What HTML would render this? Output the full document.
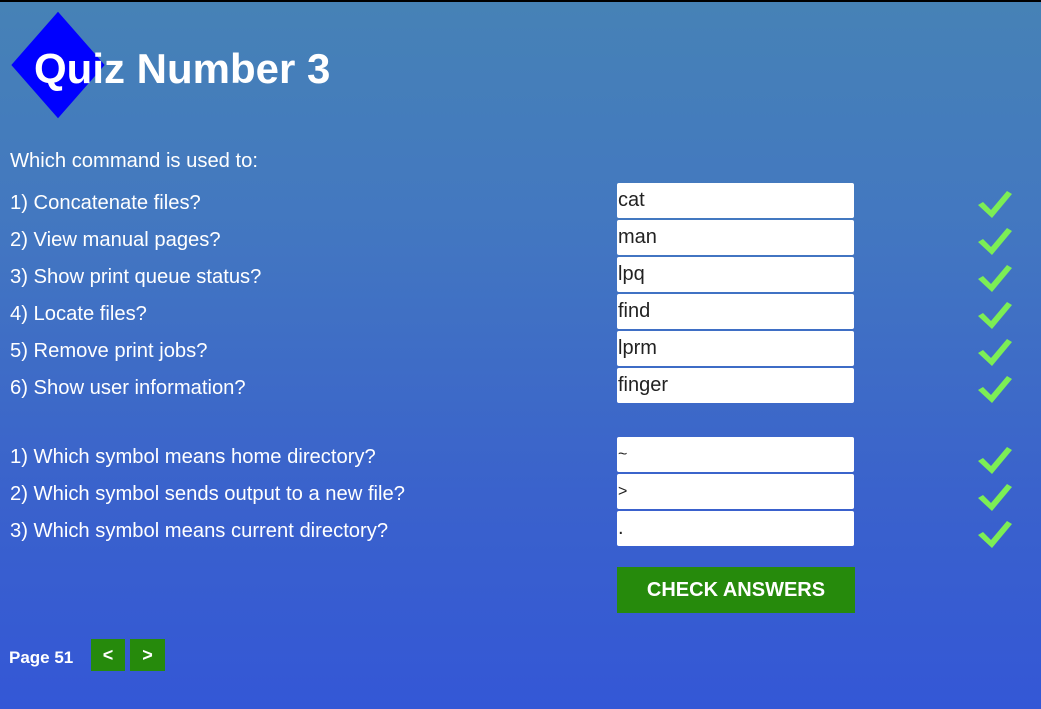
<!DOCTYPE html>
<html><head><style>
body{margin:0;width:1041px;height:709px;overflow:hidden;background:linear-gradient(#4682b6,#4378c0 30%,#3a62cc 70%,#3457d6);font-family:"Liberation Sans",sans-serif;position:relative;border-top:2px solid #000;box-sizing:border-box}
.d{position:absolute;left:24.5px;top:30px;width:66px;height:66px;background:#0000ff;transform:scaleY(1.14) rotate(45deg)}
h1{position:absolute;left:34px;top:43px;margin:0;font-size:42px;color:#fff;font-weight:bold}
.l{position:absolute;left:10px;color:#fff;font-size:20.2px;line-height:24px}
.i{position:absolute;left:617px;width:237px;height:35px;background:#fff;border-radius:2px;font-size:20px;line-height:35px;color:#222;box-sizing:border-box;padding-left:1px}
.c{position:absolute;left:978px;width:36px;height:30px}
.b{position:absolute;background:#268a0c;color:#fff;font-weight:bold;text-align:center}
</style></head><body>
<div class="d"></div><h1>Quiz Number 3</h1>
<div class="l" style="top:147px">Which command is used to:</div>
<div class="l" style="top:189px">1) Concatenate files?</div>
<div class="l" style="top:226px">2) View manual pages?</div>
<div class="l" style="top:263px">3) Show print queue status?</div>
<div class="l" style="top:300px">4) Locate files?</div>
<div class="l" style="top:337px">5) Remove print jobs?</div>
<div class="l" style="top:374px">6) Show user information?</div>
<div class="l" style="top:443px">1) Which symbol means home directory?</div>
<div class="l" style="top:480px">2) Which symbol sends output to a new file?</div>
<div class="l" style="top:517px">3) Which symbol means current directory?</div>
<div class="i" style="top:181px">cat</div>
<div class="i" style="top:218px">man</div>
<div class="i" style="top:255px">lpq</div>
<div class="i" style="top:292px">find</div>
<div class="i" style="top:329px">lprm</div>
<div class="i" style="top:366px">finger</div>
<div class="i" style="top:435px;font-size:16px">~</div>
<div class="i" style="top:472px;font-size:16px">&gt;</div>
<div class="i" style="top:509px">.</div>
<svg width="0" height="0" style="position:absolute"><defs><polygon id="k" points="0,16 5,13 13,21 29,2 34,5 14,29" fill="#7cee55"/></defs></svg>
<svg class="c" style="top:187px"><use href="#k"/></svg>
<svg class="c" style="top:224px"><use href="#k"/></svg>
<svg class="c" style="top:261px"><use href="#k"/></svg>
<svg class="c" style="top:298px"><use href="#k"/></svg>
<svg class="c" style="top:335px"><use href="#k"/></svg>
<svg class="c" style="top:372px"><use href="#k"/></svg>
<svg class="c" style="top:443px"><use href="#k"/></svg>
<svg class="c" style="top:480px"><use href="#k"/></svg>
<svg class="c" style="top:517px"><use href="#k"/></svg>
<div class="b" style="left:617px;top:565px;width:238px;height:46px;line-height:46px;font-size:20px">CHECK ANSWERS</div>
<div style="position:absolute;left:9px;top:646px;color:#fff;font-weight:bold;font-size:17px">Page 51</div>
<div class="b" style="left:91px;top:637px;width:34px;height:32px;line-height:32px;font-size:18px">&lt;</div>
<div class="b" style="left:130px;top:637px;width:35px;height:32px;line-height:32px;font-size:18px">&gt;</div>
</body></html>
